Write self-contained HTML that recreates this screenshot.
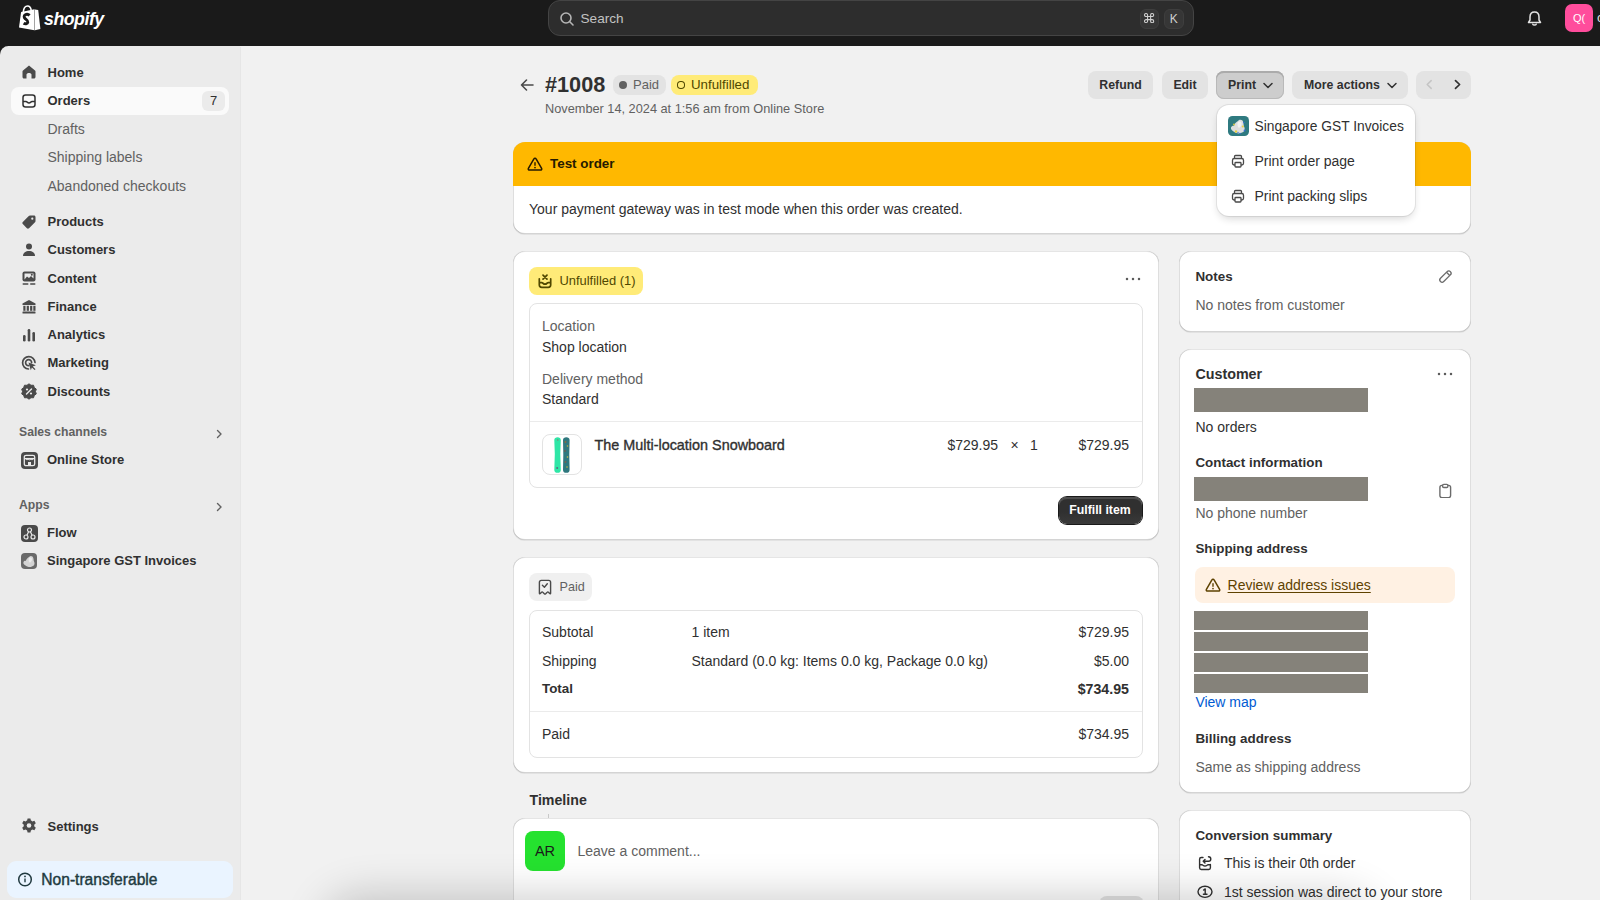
<!DOCTYPE html>
<html><head><meta charset="utf-8">
<style>
*{box-sizing:border-box;margin:0;padding:0}
html,body{width:1600px;height:900px;overflow:hidden;background:#1a1a1a;font-family:"Liberation Sans",sans-serif;color:#303030;font-size:13px}
.a{position:absolute}
.t{position:absolute;white-space:nowrap;line-height:16px}
#top{position:absolute;left:0;top:0;width:1600px;height:46px;background:#1a1a1a}
#side{position:absolute;left:0;top:46px;width:240px;height:854px;background:#ebebeb;border-top-left-radius:8.5px}
#main{position:absolute;left:240px;top:46px;width:1360px;height:854px;background:#f1f1f1}

.sub{position:absolute;left:47px;color:#616161;font-size:13px;line-height:16px;white-space:nowrap}
.ico{position:absolute;left:21px;width:16px;height:16px}
.card{position:absolute;background:#fff;border-radius:12px;box-shadow:0 1px 0 0 rgba(26,26,26,.07),inset 0 -1px 0 0 rgba(0,0,0,.17),inset 1px 0 0 0 rgba(0,0,0,.13),inset -1px 0 0 0 rgba(0,0,0,.13),inset 0 1px 0 0 rgba(204,204,204,.5)}
.inner{position:absolute;border-radius:8px;border:1px solid #e3e3e3;background:#fff}
.btn{position:absolute;height:28px;border-radius:8px;background:#e3e3e3;font-weight:bold;color:#303030;font-size:13px;line-height:28px;text-align:center;white-space:nowrap}
.h{font-weight:bold}
.g{color:#616161}
.r{text-align:right}
</style></head>
<body>
<div id="top">
  <!-- logo -->
  <svg class="a" style="left:14px;top:2px" width="32" height="32" viewBox="0 0 32 32">
    <path d="M5 25.6 L7.1 10.1 L20.4 7.3 L20.4 28.3 Z" fill="#fff"/><path d="M20.2 7.3 L21.1 7.4 L21.1 28.3 L20.2 28.3 Z" fill="#a0a0a0"/>
    <path d="M20.9 7.4 L24.2 8 L26.4 26.9 L20.9 28.3 Z" fill="#fff"/>
    <path d="M9.3 10 C9.6 6.3 11.5 4 13.6 4 C15.6 4 16.8 5.8 17.2 8.3" stroke="#fff" stroke-width="1.6" fill="none"/>
    <path d="M12.2 8.6 C12.6 6.6 13.4 5.8 14.3 5.9" stroke="#1a1a1a" stroke-width="0.7" fill="none"/>
    <path d="M15.6 13.4 C14.6 12.4 12.6 12 11.3 12.7 C9.7 13.6 9.9 15.5 11.1 16.6 C12.3 17.7 14.1 18.4 13.8 20.2 C13.5 22 11.1 22.1 9.6 21.2" stroke="#1a1a1a" stroke-width="2.9" fill="none"/>
  </svg>
  <div class="t" style="left:44px;top:8px;font-size:17.8px;line-height:22px;font-weight:bold;font-style:italic;color:#fff;letter-spacing:-0.5px">shopify</div>
  <!-- search -->
  <div class="a" style="left:548px;top:0px;width:646px;height:36px;border-radius:12px;background:#2d2d2d;border:1px solid #444"></div>
  <svg class="a" style="left:559px;top:11px" width="16" height="16" viewBox="0 0 16 16"><circle cx="7" cy="7" r="5" stroke="#b5b5b5" stroke-width="1.6" fill="none"/><path d="M10.8 10.8 L14 14" stroke="#b5b5b5" stroke-width="1.6" stroke-linecap="round"/></svg>
  <div class="t" style="left:580.5px;top:10.5px;color:#c2c2c2;font-size:13.6px">Search</div>
  <div class="a" style="left:1139.5px;top:8.5px;width:19.5px;height:20px;border-radius:6px;background:#363636;border:1px solid #3e3e3e"></div>
  <svg class="a" style="left:1144.4px;top:13.2px" width="10.2" height="10.2" viewBox="0 0 10 10"><path d="M3.5 3.5 L3.5 2 A1.5 1.5 0 1 0 2 3.5 L8 3.5 A1.5 1.5 0 1 0 6.5 2 L6.5 8 A1.5 1.5 0 1 0 8 6.5 L2 6.5 A1.5 1.5 0 1 0 3.5 8 Z" stroke="#cfcfcf" stroke-width="1.05" fill="none"/></svg>
  <div class="a" style="left:1164px;top:8.5px;width:19.5px;height:20px;border-radius:6px;background:#363636;border:1px solid #3e3e3e"></div>
  <div class="t" style="left:1164px;top:10.8px;width:19.5px;text-align:center;color:#cfcfcf;font-size:12px">K</div>
  <!-- bell -->
  <svg class="a" style="left:1526px;top:10px" width="17" height="17" viewBox="0 0 17 17"><path d="M8.5 2 C5.5 2 4 4.3 4 7 L4 10 L2.5 12.5 L14.5 12.5 L13 10 L13 7 C13 4.3 11.5 2 8.5 2 Z" stroke="#e3e3e3" stroke-width="1.5" fill="none" stroke-linejoin="round"/><path d="M6.8 14.2 C7.2 15.3 9.8 15.3 10.2 14.2" stroke="#e3e3e3" stroke-width="1.5" fill="none" stroke-linecap="round"/></svg>
  <div class="a" style="left:1565px;top:4px;width:28px;height:28px;border-radius:7px;background:#ff4d9c"></div>
  <div class="t" style="left:1565px;top:10px;width:28px;text-align:center;color:#fff;font-size:11px">Q(</div>
  <div class="t" style="left:1597px;top:10px;color:#e3e3e3;font-size:13px">c</div>
</div>



<div id="side"></div><div id="main"></div>
<div class="a" style="left:240px;top:47px;width:1px;height:853px;background:#e6e6e6;border-radius:0px;"></div>
<div class="a" style="left:11px;top:87px;width:218px;height:28px;background:#fafafa;border-radius:8px;"></div>
<div class="a" style="left:202px;top:91px;width:23px;height:20px;background:#ebebeb;border-radius:6px;"></div>
<div class="t" style="left:202px;top:93.15px;font-size:13px;line-height:16px;color:#303030;width:23px;text-align:center;">7</div>
<svg class="a" style="left:19px;top:62px" width="20" height="20" viewBox="0 0 20 20"><path d="M10 3.5 L16 8.5 C16.3 8.8 16.5 9.2 16.5 9.6 L16.5 15 C16.5 15.8 15.8 16.5 15 16.5 L12.5 16.5 L12.5 12.5 C12.5 11.7 11.3 11 10 11 C8.7 11 7.5 11.7 7.5 12.5 L7.5 16.5 L5 16.5 C4.2 16.5 3.5 15.8 3.5 15 L3.5 9.6 C3.5 9.2 3.7 8.8 4 8.5 Z" fill="#4a4a4a"/></svg>
<div class="t" style="left:47.5px;top:64.65px;font-size:13px;line-height:16px;color:#303030;font-weight:bold;">Home</div>
<svg class="a" style="left:19px;top:91px" width="20" height="20" viewBox="0 0 20 20"><path d="M6.5 4 L13.5 4 C15 4 16 5 16 6.5 L16 13.5 C16 15 15 16 13.5 16 L6.5 16 C5 16 4 15 4 13.5 L4 6.5 C4 5 5 4 6.5 4 Z" stroke="#303030" stroke-width="1.5" fill="none"/><path d="M4 10.5 L7 10.5 C8 10.5 8.5 12 10 12 C11.5 12 12 10.5 13 10.5 L16 10.5" stroke="#303030" stroke-width="1.5" fill="none"/></svg>
<div class="t" style="left:47.5px;top:92.85px;font-size:13px;line-height:16px;color:#303030;font-weight:bold;">Orders</div>
<div class="t" style="left:47.5px;top:121.16px;font-size:14px;line-height:16px;color:#616161;">Drafts</div>
<div class="t" style="left:47.5px;top:149.46px;font-size:14px;line-height:16px;color:#616161;">Shipping labels</div>
<div class="t" style="left:47.5px;top:177.86px;font-size:14px;line-height:16px;color:#616161;">Abandoned checkouts</div>
<svg class="a" style="left:19px;top:212px" width="20" height="20" viewBox="0 0 20 20"><path d="M11 3.5 L15 3.5 C15.8 3.5 16.5 4.2 16.5 5 L16.5 9 C16.5 9.5 16.3 9.9 16 10.2 L10 16.2 C9.4 16.8 8.5 16.8 7.9 16.2 L3.8 12.1 C3.2 11.5 3.2 10.6 3.8 10 L9.8 4 C10.1 3.7 10.5 3.5 11 3.5 Z" fill="#4a4a4a"/><circle cx="13.3" cy="6.7" r="1.1" fill="#ebebeb"/></svg>
<div class="t" style="left:47.5px;top:214.15px;font-size:13px;line-height:16px;color:#303030;font-weight:bold;">Products</div>
<svg class="a" style="left:19px;top:240px" width="20" height="20" viewBox="0 0 20 20"><circle cx="10" cy="6.5" r="3" fill="#4a4a4a"/><path d="M4 16 C4 12.5 6.8 11 10 11 C13.2 11 16 12.5 16 16 Z" fill="#4a4a4a"/></svg>
<div class="t" style="left:47.5px;top:242.38px;font-size:13px;line-height:16px;color:#303030;font-weight:bold;">Customers</div>
<svg class="a" style="left:19px;top:268px" width="20" height="20" viewBox="0 0 20 20"><rect x="3.5" y="3.5" width="13" height="10" rx="2" fill="#4a4a4a"/><path d="M5.5 11.5 L8 8.5 L10 10 L12 8 L14.5 10.5 L14.5 5.5 L5.5 5.5 Z" fill="#ebebeb"/><circle cx="12.8" cy="6.8" r="1" fill="#4a4a4a"/><rect x="3.5" y="15.3" width="6" height="1.4" rx=".7" fill="#4a4a4a"/><rect x="11" y="15.3" width="5.5" height="1.4" rx=".7" fill="#4a4a4a"/></svg>
<div class="t" style="left:47.5px;top:270.61px;font-size:13px;line-height:16px;color:#303030;font-weight:bold;">Content</div>
<svg class="a" style="left:19px;top:297px" width="20" height="20" viewBox="0 0 20 20"><path d="M10 3 L16.5 6.5 L16.5 8 L3.5 8 L3.5 6.5 Z" fill="#4a4a4a"/><rect x="4.3" y="8.8" width="2.2" height="5" fill="#4a4a4a"/><rect x="7.7" y="8.8" width="2.2" height="5" fill="#4a4a4a"/><rect x="11.1" y="8.8" width="2.2" height="5" fill="#4a4a4a"/><rect x="14.3" y="8.8" width="2.2" height="5" fill="#4a4a4a"/><rect x="3.5" y="14.5" width="13" height="2" rx=".5" fill="#4a4a4a"/></svg>
<div class="t" style="left:47.5px;top:298.84px;font-size:13px;line-height:16px;color:#303030;font-weight:bold;">Finance</div>
<svg class="a" style="left:19px;top:325px" width="20" height="20" viewBox="0 0 20 20"><rect x="4" y="10" width="2.6" height="6.5" rx="1.3" fill="#4a4a4a"/><rect x="8.7" y="4" width="2.6" height="12.5" rx="1.3" fill="#4a4a4a"/><rect x="13.4" y="7" width="2.6" height="9.5" rx="1.3" fill="#4a4a4a"/></svg>
<div class="t" style="left:47.5px;top:327.07px;font-size:13px;line-height:16px;color:#303030;font-weight:bold;">Analytics</div>
<svg class="a" style="left:19px;top:353px" width="20" height="20" viewBox="0 0 20 20"><path d="M16 9.5 A6.2 6.2 0 1 0 9.5 16" stroke="#4a4a4a" stroke-width="1.7" fill="none" stroke-linecap="round"/><path d="M12.6 9.7 A3 3 0 1 0 9.7 12.6" stroke="#4a4a4a" stroke-width="1.7" fill="none" stroke-linecap="round"/><path d="M9.5 9.5 L16.8 12.3 L13.8 13.5 L16.5 16.2 L15.6 17.1 L12.9 14.4 L11.8 17.2 Z" fill="#4a4a4a"/></svg>
<div class="t" style="left:47.5px;top:355.30px;font-size:13px;line-height:16px;color:#303030;font-weight:bold;">Marketing</div>
<svg class="a" style="left:19px;top:381px" width="20" height="20" viewBox="0 0 20 20"><path d="M10 2.8 L12 4.3 L14.5 4.2 L15.3 6.6 L17.3 8.1 L16.5 10.5 L17.3 12.9 L15.3 14.4 L14.5 16.8 L12 16.7 L10 18.2 L8 16.7 L5.5 16.8 L4.7 14.4 L2.7 12.9 L3.5 10.5 L2.7 8.1 L4.7 6.6 L5.5 4.2 L8 4.3 Z" fill="#4a4a4a" stroke="#4a4a4a" stroke-width="1" stroke-linejoin="round"/><path d="M7.5 13 L12.5 8" stroke="#ebebeb" stroke-width="1.4" stroke-linecap="round"/><circle cx="8" cy="8.5" r="1.1" fill="#ebebeb"/><circle cx="12" cy="12.5" r="1.1" fill="#ebebeb"/></svg>
<div class="t" style="left:47.5px;top:383.53px;font-size:13px;line-height:16px;color:#303030;font-weight:bold;">Discounts</div>
<div class="t" style="left:19px;top:424.14px;font-size:12.2px;line-height:16px;color:#616161;font-weight:bold;">Sales channels</div>
<svg class="a" style="left:213px;top:428px" width="12" height="12" viewBox="0 0 12 12"><path d="M4.5 2.5 L8 6 L4.5 9.5" stroke="#616161" stroke-width="1.4" fill="none" stroke-linecap="round" stroke-linejoin="round"/></svg>
<div class="a" style="left:21px;top:452px;width:17px;height:17px;background:#4a4a4a;border-radius:4px;"></div>
<svg class="a" style="left:21px;top:452px" width="17" height="17" viewBox="0 0 17 17"><rect x="3.3" y="3.3" width="10.4" height="10.4" rx="1.8" stroke="#ebebeb" stroke-width="1.3" fill="none"/><path d="M3.5 6.6 L13.5 6.6" stroke="#ebebeb" stroke-width="1.3"/><path d="M5 6.6 C5 8.2 7 8.2 7 6.6 C7 8.2 10 8.2 10 6.6 C10 8.2 12 8.2 12 6.6" stroke="#ebebeb" stroke-width="1" fill="none"/><rect x="7" y="10" width="3" height="3.5" fill="#ebebeb"/></svg>
<div class="t" style="left:47px;top:452.45px;font-size:13px;line-height:16px;color:#303030;font-weight:bold;">Online Store</div>
<div class="t" style="left:19px;top:496.64px;font-size:12.2px;line-height:16px;color:#616161;font-weight:bold;">Apps</div>
<svg class="a" style="left:213px;top:501px" width="12" height="12" viewBox="0 0 12 12"><path d="M4.5 2.5 L8 6 L4.5 9.5" stroke="#616161" stroke-width="1.4" fill="none" stroke-linecap="round" stroke-linejoin="round"/></svg>
<div class="a" style="left:21px;top:525px;width:17px;height:17px;background:#4a4a4a;border-radius:4px;"></div>
<svg class="a" style="left:21px;top:525px" width="17" height="17" viewBox="0 0 17 17"><circle cx="8.5" cy="5" r="2" stroke="#ebebeb" stroke-width="1.2" fill="none"/><circle cx="5" cy="12" r="2" stroke="#ebebeb" stroke-width="1.2" fill="none"/><circle cx="12" cy="12" r="2" stroke="#ebebeb" stroke-width="1.2" fill="none"/><path d="M7.6 6.8 L5.9 10.2 M9.4 6.8 L11.1 10.2" stroke="#ebebeb" stroke-width="1.2" fill="none"/></svg>
<div class="t" style="left:47px;top:524.95px;font-size:13px;line-height:16px;color:#303030;font-weight:bold;">Flow</div>
<div class="a" style="left:21.3px;top:553.4px;width:16px;height:16px;background:#6a6a6a;border-radius:4px;"></div>
<svg class="a" style="left:21px;top:553px" width="17" height="17" viewBox="0 0 21 21"><path d="M3 11.5 C3.5 10 5 9.5 6 9.8 C6.5 8 8 6 10 5 C11 3.5 13 3.5 14.5 4.5 C15.5 6 15.5 8 15.8 10 C17 12 17 14 15.8 15.5 C14 17 11 18 8.5 17 C6.5 16.5 4.5 15 3 13 Z" fill="#d4d4d4"/><path d="M10 6 C11.5 5 13 5.5 13.5 7 C14 9 12.5 11 11 12 C9.5 11 9 8 10 6 Z" fill="#ececec"/></svg>
<div class="t" style="left:47px;top:553.15px;font-size:13px;line-height:16px;color:#303030;font-weight:bold;">Singapore GST Invoices</div>
<svg class="a" style="left:19px;top:816px" width="20" height="20" viewBox="0 0 20 20"><path d="M8.6 2.5 L11.4 2.5 L11.9 4.6 C12.4 4.8 12.9 5.1 13.3 5.4 L15.4 4.8 L16.8 7.2 L15.2 8.7 C15.3 9.2 15.3 9.8 15.2 10.3 L16.8 11.8 L15.4 14.2 L13.3 13.6 C12.9 13.9 12.4 14.2 11.9 14.4 L11.4 16.5 L8.6 16.5 L8.1 14.4 C7.6 14.2 7.1 13.9 6.7 13.6 L4.6 14.2 L3.2 11.8 L4.8 10.3 C4.7 9.8 4.7 9.2 4.8 8.7 L3.2 7.2 L4.6 4.8 L6.7 5.4 C7.1 5.1 7.6 4.8 8.1 4.6 Z" fill="#4a4a4a"/><circle cx="10" cy="9.5" r="2.3" fill="#ebebeb"/></svg>
<div class="t" style="left:47.5px;top:818.65px;font-size:13px;line-height:16px;color:#303030;font-weight:bold;">Settings</div>
<div class="a" style="left:7px;top:861px;width:226px;height:37px;background:#eaf4ff;border-radius:9px;"></div>
<svg class="a" style="left:17px;top:871px" width="16" height="16" viewBox="0 0 16 16"><circle cx="8" cy="8.5" r="6.3" stroke="#213a40" stroke-width="1.5" fill="none"/><rect x="7.3" y="7.3" width="1.4" height="4.2" rx=".7" fill="#213a40"/><circle cx="8" cy="5.4" r=".9" fill="#213a40"/></svg>
<div class="t" style="left:41.3px;top:871.78px;font-size:15.6px;line-height:16px;color:#213a40;-webkit-text-stroke:0.4px #213a40;">Non-transferable</div>
<svg class="a" style="left:517px;top:75px" width="20" height="20" viewBox="0 0 20 20"><path d="M16 10 L4.5 10 M9.5 5 L4.5 10 L9.5 15" stroke="#4a4a4a" stroke-width="1.6" fill="none" stroke-linecap="round" stroke-linejoin="round"/></svg>
<div class="t" style="left:545px;top:72.55px;font-size:21.7px;line-height:24px;color:#303030;font-weight:bold;">#1008</div>
<div class="a" style="left:613px;top:75px;width:53px;height:20px;background:#e3e3e3;border-radius:8px;"></div>
<div class="a" style="left:619.2px;top:80.8px;width:8px;height:8px;border-radius:50%;background:#616161"></div>
<div class="t" style="left:633px;top:77.15px;font-size:13px;line-height:16px;color:#616161;">Paid</div>
<div class="a" style="left:671px;top:75px;width:87px;height:20px;background:#ffeb78;border-radius:8px;"></div>
<div class="a" style="left:676.6px;top:80.6px;width:8.2px;height:8.4px;border-radius:45%;border:1.9px solid #4f4700"></div>
<div class="t" style="left:691px;top:77.15px;font-size:13.3px;line-height:16px;color:#4f4700;">Unfulfilled</div>
<div class="t" style="left:545px;top:100.90px;font-size:12.75px;line-height:16px;color:#616161;">November 14, 2024 at 1:56 am from Online Store</div>
<div class="a" style="left:1088px;top:70.5px;width:65px;height:28.5px;background:#e3e3e3;border-radius:8px;"></div>
<div class="t" style="left:1088px;top:76.84px;font-size:12.3px;line-height:16px;color:#303030;font-weight:bold;width:65px;text-align:center;">Refund</div>
<div class="a" style="left:1162px;top:70.5px;width:46px;height:28.5px;background:#e3e3e3;border-radius:8px;"></div>
<div class="t" style="left:1162px;top:76.84px;font-size:12.3px;line-height:16px;color:#303030;font-weight:bold;width:46px;text-align:center;">Edit</div>
<div class="a" style="left:1216px;top:70.5px;width:68px;height:28.5px;border-radius:8px;background:#cdcdcd;box-shadow:inset 0 2px 0 #ababab,inset 0 0 0 1px #b9b9b9"></div>
<div class="t" style="left:1228px;top:76.84px;font-size:12.3px;line-height:16px;color:#303030;font-weight:bold;">Print</div>
<svg class="a" style="left:1261px;top:78px" width="14" height="14" viewBox="0 0 14 14"><path d="M3 5.5 L7 9.5 L11 5.5" stroke="#303030" stroke-width="1.5" fill="none" stroke-linecap="round" stroke-linejoin="round"/></svg>
<div class="a" style="left:1292px;top:70.5px;width:116px;height:28.5px;background:#e3e3e3;border-radius:8px;"></div>
<div class="t" style="left:1304px;top:76.84px;font-size:12.3px;line-height:16px;color:#303030;font-weight:bold;">More actions</div>
<svg class="a" style="left:1385px;top:78px" width="14" height="14" viewBox="0 0 14 14"><path d="M3 5.5 L7 9.5 L11 5.5" stroke="#303030" stroke-width="1.5" fill="none" stroke-linecap="round" stroke-linejoin="round"/></svg>
<div class="a" style="left:1416px;top:70.5px;width:55px;height:28.5px;background:#e3e3e3;border-radius:8px;"></div>
<svg class="a" style="left:1422px;top:77px" width="14" height="14" viewBox="0 0 14 14"><path d="M9.2 3.6 L5.2 7.5 L9.2 11.4" stroke="#c4c4c4" stroke-width="1.5" fill="none" stroke-linecap="round" stroke-linejoin="round"/></svg>
<svg class="a" style="left:1450px;top:77px" width="14" height="14" viewBox="0 0 14 14"><path d="M5.5 3.6 L9.6 7.5 L5.5 11.4" stroke="#303030" stroke-width="1.7" fill="none" stroke-linecap="round" stroke-linejoin="round"/></svg>
<div class="card" style="left:513px;top:142px;width:958px;height:92px;overflow:hidden"><div class="a" style="left:0;top:0;width:958px;height:44px;background:#ffb800"></div></div>
<svg class="a" style="left:527px;top:156px" width="16" height="16" viewBox="0 0 16 16"><path d="M6.9 2.9 C7.4 2 8.6 2 9.1 2.9 L14.6 12.3 C15.1 13.2 14.5 14 13.5 14 L2.5 14 C1.5 14 0.9 13.2 1.4 12.3 Z" stroke="#251a00" stroke-width="1.5" fill="none" stroke-linejoin="round"/><rect x="7.3" y="6" width="1.4" height="4" rx=".7" fill="#251a00"/><circle cx="8" cy="11.6" r=".85" fill="#251a00"/></svg>
<div class="t" style="left:550px;top:156.15px;font-size:13.4px;line-height:16px;color:#251a00;font-weight:bold;">Test order</div>
<div class="t" style="left:529px;top:200.66px;font-size:14px;line-height:16px;color:#303030;">Your payment gateway was in test mode when this order was created.</div>
<div class="card" style="left:513px;top:251px;width:645.5px;height:289px"></div>
<div class="a" style="left:529px;top:267px;width:114px;height:28px;background:#ffeb78;border-radius:8px;"></div>
<svg class="a" style="left:537px;top:273px" width="16" height="16" viewBox="0 0 16 16"><path d="M2.3 5.8 L2.3 11.8 C2.3 13.3 3.3 14.3 4.8 14.3 L11.2 14.3 C12.7 14.3 13.7 13.3 13.7 11.8 L13.7 5.8" stroke="#4f4700" stroke-width="1.7" fill="none" stroke-linecap="round"/><path d="M2.3 9.6 L4.8 9.6 C5.8 9.6 6.3 11.2 8 11.2 C9.7 11.2 10.2 9.6 11.2 9.6 L13.7 9.6" stroke="#4f4700" stroke-width="1.7" fill="none"/><path d="M6 2.2 L10 6.2 M10 2.2 L6 6.2" stroke="#4f4700" stroke-width="1.7" stroke-linecap="round"/></svg>
<div class="t" style="left:559.5px;top:273.15px;font-size:12.9px;line-height:16px;color:#4f4700;">Unfulfilled (1)</div>
<svg class="a" style="left:1124px;top:270px" width="18" height="18" viewBox="0 0 18 18"><circle cx="3" cy="9" r="1.25" fill="#5c5c5c"/><circle cx="9" cy="9" r="1.25" fill="#5c5c5c"/><circle cx="15" cy="9" r="1.25" fill="#5c5c5c"/></svg>
<div class="inner" style="left:529px;top:303px;width:614px;height:185px"></div>
<div class="t" style="left:542px;top:318.16px;font-size:14px;line-height:16px;color:#616161;">Location</div>
<div class="t" style="left:542px;top:338.66px;font-size:14px;line-height:16px;color:#303030;">Shop location</div>
<div class="t" style="left:542px;top:371.16px;font-size:14px;line-height:16px;color:#616161;">Delivery method</div>
<div class="t" style="left:542px;top:390.96px;font-size:14px;line-height:16px;color:#303030;">Standard</div>
<div class="a" style="left:530px;top:421px;width:612px;height:1px;background:#ebebeb;border-radius:0px;"></div>
<div class="a" style="left:542px;top:434px;width:40px;height:41px;border-radius:8px;border:1px solid #e3e3e3;background:#fff"></div>
<svg class="a" style="left:553px;top:437px" width="18" height="36" viewBox="0 0 18 36"><path d="M4.6 0.3 C6.4 0.3 7.8 1.2 7.8 3 L7.3 17 L7.8 33 C7.8 35 6.4 35.8 4.6 35.8 C2.8 35.8 1.3 35 1.3 33 L1.8 17 L1.3 3 C1.3 1.2 2.8 0.3 4.6 0.3 Z" fill="#2ee6a6"/><path d="M13.3 0.3 C15.2 0.3 16.6 1.2 16.6 3 L16.3 18 L16.6 33 C16.6 35 15.2 35.8 13.3 35.8 C11.5 35.8 10 35 10 33 L10.3 18 L10 3 C10 1.2 11.5 0.3 13.3 0.3 Z" fill="#2f787e"/><circle cx="12.5" cy="5" r=".9" fill="#8a6a40"/><circle cx="14.5" cy="9" r=".8" fill="#c9b030"/><circle cx="12" cy="14" r=".9" fill="#6a5a50"/><circle cx="14.5" cy="20" r=".8" fill="#d0c040"/><circle cx="12.5" cy="25" r=".9" fill="#7a6050"/><circle cx="14" cy="30" r=".8" fill="#c9b030"/><circle cx="4.8" cy="3" r=".7" fill="#8a7a70"/><circle cx="4.2" cy="31" r="1" fill="#5a6a80"/></svg>
<div class="t" style="left:594.5px;top:436.87px;font-size:14.4px;line-height:16px;color:#303030;-webkit-text-stroke:0.35px #303030;">The Multi-location Snowboard</div>
<div class="t" style="left:598px;top:436.86px;font-size:14px;line-height:16px;color:#303030;width:400px;text-align:right;">$729.95</div>
<div class="t" style="left:1010.5px;top:436.86px;font-size:14px;line-height:16px;color:#303030;">×</div>
<div class="t" style="left:1030px;top:436.86px;font-size:14px;line-height:16px;color:#303030;">1</div>
<div class="t" style="left:729px;top:436.86px;font-size:14px;line-height:16px;color:#303030;width:400px;text-align:right;">$729.95</div>
<div class="a" style="left:1059px;top:497px;width:83px;height:26.5px;border-radius:8px;background:linear-gradient(#303030 55%,#3a3a3a);box-shadow:inset 0 2px 0 #4d4d4d,0 0 0 1px #1a1a1a"></div>
<div class="t" style="left:1058px;top:502.44px;font-size:12.3px;line-height:16px;color:#fff;font-weight:bold;width:84px;text-align:center;">Fulfill item</div>
<div class="card" style="left:513px;top:557px;width:645.5px;height:216px"></div>
<div class="a" style="left:529px;top:573px;width:63px;height:28px;background:#f0f0f0;border-radius:8px;"></div>
<svg class="a" style="left:537px;top:579px" width="16" height="16" viewBox="0 0 16 16"><path d="M4.3 1.4 L11.7 1.4 C12.9 1.4 13.6 2.1 13.6 3.3 L13.6 14.2 C13.6 14.8 13.1 15 12.7 14.6 L11.5 13.2 C11.1 12.8 10.6 12.8 10.2 13.3 L8.7 14.8 C8.3 15.2 7.7 15.2 7.3 14.8 L5.8 13.3 C5.4 12.8 4.9 12.8 4.5 13.2 L3.3 14.6 C2.9 15 2.4 14.8 2.4 14.2 L2.4 3.3 C2.4 2.1 3.1 1.4 4.3 1.4 Z" stroke="#4a4a4a" stroke-width="1.4" fill="none" stroke-linejoin="round"/><path d="M5.4 6.3 L7.4 8.2 L10.3 4.8" stroke="#4a4a4a" stroke-width="1.4" fill="none" stroke-linecap="round" stroke-linejoin="round"/></svg>
<div class="t" style="left:559.5px;top:579.14px;font-size:12.6px;line-height:16px;color:#616161;">Paid</div>
<div class="inner" style="left:529px;top:609.5px;width:614px;height:148px"></div>
<div class="t" style="left:542px;top:624.16px;font-size:14px;line-height:16px;color:#303030;">Subtotal</div>
<div class="t" style="left:691.5px;top:624.16px;font-size:14px;line-height:16px;color:#303030;">1 item</div>
<div class="t" style="left:729px;top:624.16px;font-size:14px;line-height:16px;color:#303030;width:400px;text-align:right;">$729.95</div>
<div class="t" style="left:542px;top:652.66px;font-size:14px;line-height:16px;color:#303030;">Shipping</div>
<div class="t" style="left:691.5px;top:652.66px;font-size:14px;line-height:16px;color:#303030;">Standard (0.0 kg: Items 0.0 kg, Package 0.0 kg)</div>
<div class="t" style="left:729px;top:652.66px;font-size:14px;line-height:16px;color:#303030;width:400px;text-align:right;">$5.00</div>
<div class="t" style="left:542px;top:681.15px;font-size:13.4px;line-height:16px;color:#303030;font-weight:bold;">Total</div>
<div class="t" style="left:729px;top:681.16px;font-size:14.2px;line-height:16px;color:#303030;font-weight:bold;width:400px;text-align:right;">$734.95</div>
<div class="a" style="left:530px;top:711px;width:612px;height:1px;background:#ebebeb;border-radius:0px;"></div>
<div class="t" style="left:542px;top:726.16px;font-size:14px;line-height:16px;color:#303030;">Paid</div>
<div class="t" style="left:729px;top:726.16px;font-size:14px;line-height:16px;color:#303030;width:400px;text-align:right;">$734.95</div>
<div class="t" style="left:529.5px;top:792.16px;font-size:14.2px;line-height:16px;color:#303030;font-weight:bold;">Timeline</div>
<div class="a" style="left:548px;top:814px;width:1.2px;height:4px;background:#c8c8c8;border-radius:0px;"></div>
<div class="card" style="left:513px;top:818px;width:645.5px;height:120px"></div>
<div class="a" style="left:525px;top:830.5px;width:40px;height:40.5px;background:#25e22f;border-radius:8px;"></div>
<div class="t" style="left:525px;top:842.67px;font-size:14.5px;line-height:16px;color:#1a1a1a;width:40px;text-align:center;">AR</div>
<div class="t" style="left:577.5px;top:842.66px;font-size:14px;line-height:16px;color:#616161;">Leave a comment...</div>
<div class="card" style="left:1179px;top:251px;width:292px;height:80.5px"></div>
<div class="t" style="left:1195.4px;top:269.15px;font-size:13.4px;line-height:16px;color:#303030;font-weight:bold;">Notes</div>
<div class="t" style="left:1195.4px;top:297.16px;font-size:14px;line-height:16px;color:#616161;">No notes from customer</div>
<svg class="a" style="left:1437px;top:269px" width="16" height="16" viewBox="0 0 16 16"><g transform="rotate(45 8.5 7.5)"><rect x="6.2" y="0.6" width="4.6" height="14" rx="2.3" stroke="#6b6b6b" stroke-width="1.3" fill="none"/><path d="M6.2 3.8 L10.8 3.8" stroke="#6b6b6b" stroke-width="1.3"/></g></svg>
<div class="card" style="left:1179px;top:348.5px;width:292px;height:444px"></div>
<div class="t" style="left:1195.4px;top:366.36px;font-size:14.3px;line-height:16px;color:#303030;font-weight:bold;">Customer</div>
<svg class="a" style="left:1436px;top:365px" width="18" height="18" viewBox="0 0 18 18"><circle cx="3" cy="9" r="1.25" fill="#5c5c5c"/><circle cx="9" cy="9" r="1.25" fill="#5c5c5c"/><circle cx="15" cy="9" r="1.25" fill="#5c5c5c"/></svg>
<div class="a" style="left:1194px;top:388px;width:174px;height:23.6px;background:#85827a;border-radius:0px;"></div>
<div class="t" style="left:1195.4px;top:418.66px;font-size:14px;line-height:16px;color:#303030;">No orders</div>
<div class="t" style="left:1195.4px;top:455.15px;font-size:13.4px;line-height:16px;color:#303030;font-weight:bold;">Contact information</div>
<div class="a" style="left:1194px;top:477px;width:174px;height:24px;background:#85827a;border-radius:0px;"></div>
<svg class="a" style="left:1437px;top:482px" width="16" height="16" viewBox="0 0 16 16"><rect x="2.9" y="3.4" width="10.7" height="12.2" rx="2" stroke="#6b6b6b" stroke-width="1.4" fill="none"/><rect x="5.6" y="2.4" width="5.3" height="3.1" rx="1.2" stroke="#6b6b6b" stroke-width="1.4" fill="#fff"/></svg>
<div class="t" style="left:1195.4px;top:504.66px;font-size:14px;line-height:16px;color:#616161;">No phone number</div>
<div class="t" style="left:1195.4px;top:540.65px;font-size:13.4px;line-height:16px;color:#303030;font-weight:bold;">Shipping address</div>
<div class="a" style="left:1195px;top:567.4px;width:260px;height:36px;background:#fff1e3;border-radius:8px;"></div>
<svg class="a" style="left:1205px;top:577px" width="16" height="16" viewBox="0 0 16 16"><path d="M6.9 2.9 C7.4 2 8.6 2 9.1 2.9 L14.6 12.3 C15.1 13.2 14.5 14 13.5 14 L2.5 14 C1.5 14 0.9 13.2 1.4 12.3 Z" stroke="#5e4200" stroke-width="1.5" fill="none" stroke-linejoin="round"/><rect x="7.3" y="6" width="1.4" height="4" rx=".7" fill="#5e4200"/><circle cx="8" cy="11.6" r=".85" fill="#5e4200"/></svg>
<div class="t" style="left:1227.6px;top:577.16px;font-size:14px;line-height:16px;color:#5e4200;text-decoration:underline;text-underline-offset:2px;">Review address issues</div>
<div class="a" style="left:1194px;top:610.8px;width:174px;height:19px;background:#85827a;border-radius:0px;"></div>
<div class="a" style="left:1194px;top:632px;width:174px;height:19px;background:#85827a;border-radius:0px;"></div>
<div class="a" style="left:1194px;top:653px;width:174px;height:19px;background:#85827a;border-radius:0px;"></div>
<div class="a" style="left:1194px;top:674px;width:174px;height:19px;background:#85827a;border-radius:0px;"></div>
<div class="t" style="left:1195.4px;top:694.16px;font-size:14px;line-height:16px;color:#005bd3;">View map</div>
<div class="t" style="left:1195.4px;top:730.75px;font-size:13.4px;line-height:16px;color:#303030;font-weight:bold;">Billing address</div>
<div class="t" style="left:1195.4px;top:759.16px;font-size:14px;line-height:16px;color:#616161;">Same as shipping address</div>
<div class="card" style="left:1179px;top:810px;width:292px;height:200px"></div>
<div class="t" style="left:1195.4px;top:827.55px;font-size:13.4px;line-height:16px;color:#303030;font-weight:bold;">Conversion summary</div>
<svg class="a" style="left:1197px;top:855px" width="16" height="16" viewBox="0 0 16 16"><path d="M6 2.5 L4.3 2.5 C3.4 2.5 2.6 3.3 2.6 4.2 L2.6 12.8 C2.6 13.7 3.4 14.5 4.3 14.5 L11.7 14.5 C12.6 14.5 13.4 13.7 13.4 12.8 L13.4 9.5" stroke="#303030" stroke-width="1.4" fill="none" stroke-linecap="round"/><path d="M2.6 9.8 L5 9.8 C5.8 9.8 6.3 11 8 11 C9.7 11 10.2 9.8 11 9.8 L13.4 9.8" stroke="#303030" stroke-width="1.4" fill="none"/><path d="M11.5 1.8 C13 1.8 13.8 2.8 13.8 4 C13.8 5.2 13 6.2 11.5 6.2 L6.2 6.2 M8 4.4 L6.2 6.2 L8 8" stroke="#303030" stroke-width="1.4" fill="none" stroke-linecap="round" stroke-linejoin="round"/></svg>
<div class="t" style="left:1224px;top:855.16px;font-size:14px;line-height:16px;color:#303030;">This is their 0th order</div>
<svg class="a" style="left:1197px;top:883px" width="16" height="16" viewBox="0 0 16 16"><ellipse cx="8" cy="8.8" rx="7" ry="5.6" stroke="#303030" stroke-width="1.4" fill="none"/><path d="M6.6 7 L8.2 5.9 L8.2 11.3 M6.4 11.3 L10 11.3" stroke="#303030" stroke-width="1.4" fill="none" stroke-linecap="round" stroke-linejoin="round"/></svg>
<div class="t" style="left:1224px;top:884.16px;font-size:14px;line-height:16px;color:#303030;">1st session was direct to your store</div>
<div class="a" style="left:1217px;top:105px;width:197.5px;height:111px;border-radius:12px;background:#fff;box-shadow:0 4px 8px -2px rgba(26,26,26,.2),0 0 0 1px rgba(26,26,26,.08)"></div>
<div class="a" style="left:1228.4px;top:116.4px;width:20.3px;height:20px;background:#2f7a80;border-radius:4.5px;"></div>
<svg class="a" style="left:1228px;top:116px" width="21" height="21" viewBox="0 0 21 21"><path d="M3 11.5 C3.5 10 5 9.5 6 9.8 C6.5 8 8 6 10 5 C11 3.5 13 3.5 14.5 4.5 C15.5 6 15.5 8 15.8 10 C17 12 17 14 15.8 15.5 C14 17 11 18 8.5 17 C6.5 16.5 4.5 15 3 13 Z" fill="#dedede"/><path d="M10 6 C11.5 5 13 5.5 13.5 7 C14 9 12.5 11 11 12 C9.5 11 9 8 10 6 Z" fill="#f2f2f2"/><circle cx="6" cy="8.5" r=".9" fill="#e8d040"/><circle cx="14.8" cy="10.5" r="1.1" fill="#e8d040"/><circle cx="8" cy="15.5" r="1.2" fill="#e8d040"/><circle cx="15.8" cy="6.5" r=".8" fill="#3a70d8"/><circle cx="16.5" cy="14.5" r=".9" fill="#3a70d8"/><circle cx="12" cy="17.5" r=".8" fill="#3a70d8"/><circle cx="10" cy="16.5" r=".7" fill="#3a70d8"/></svg>
<div class="t" style="left:1254.5px;top:118.66px;font-size:13.8px;line-height:16px;color:#303030;">Singapore GST Invoices</div>
<svg class="a" style="left:1230px;top:153px" width="16" height="16" viewBox="0 0 16 16"><path d="M4.5 5.5 L4.5 3.5 C4.5 2.9 5 2.5 5.5 2.5 L10.5 2.5 C11 2.5 11.5 2.9 11.5 3.5 L11.5 5.5" stroke="#4a4a4a" stroke-width="1.3" fill="none"/><rect x="2.5" y="5.5" width="11" height="6.5" rx="1.8" stroke="#4a4a4a" stroke-width="1.3" fill="none"/><rect x="5" y="9.5" width="6" height="4.5" rx=".8" stroke="#4a4a4a" stroke-width="1.3" fill="#fff"/></svg>
<div class="t" style="left:1254.5px;top:153.16px;font-size:14px;line-height:16px;color:#303030;">Print order page</div>
<svg class="a" style="left:1230px;top:187.5px" width="16" height="16" viewBox="0 0 16 16"><path d="M4.5 5.5 L4.5 3.5 C4.5 2.9 5 2.5 5.5 2.5 L10.5 2.5 C11 2.5 11.5 2.9 11.5 3.5 L11.5 5.5" stroke="#4a4a4a" stroke-width="1.3" fill="none"/><rect x="2.5" y="5.5" width="11" height="6.5" rx="1.8" stroke="#4a4a4a" stroke-width="1.3" fill="none"/><rect x="5" y="9.5" width="6" height="4.5" rx=".8" stroke="#4a4a4a" stroke-width="1.3" fill="#fff"/></svg>
<div class="t" style="left:1254.5px;top:187.66px;font-size:14px;line-height:16px;color:#303030;">Print packing slips</div>
<div class="a" style="left:1099px;top:895.5px;width:45px;height:20px;background:#e3e3e3;border-radius:8px;"></div>
<div class="a" style="left:340px;top:912px;width:1020px;height:40px;border-radius:30px;background:#ccc;box-shadow:0 0 44px 16px rgba(0,0,0,.2)"></div>
</body></html>
